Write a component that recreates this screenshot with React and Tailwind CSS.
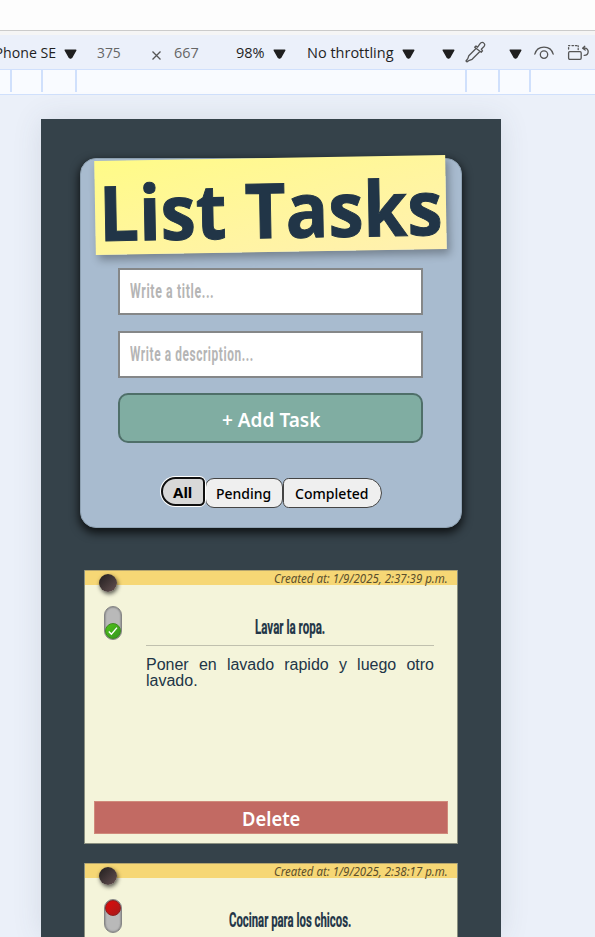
import { useLayoutEffect, useRef } from "react";

// Sets a line of text to an exact width by condensing it horizontally.
function Fit({ width, className = "", children }) {
  const ref = useRef(null);
  useLayoutEffect(() => {
    const el = ref.current;
    const apply = () => {
      el.style.transform = `scaleX(${width / el.offsetWidth})`;
    };
    apply();
    document.fonts?.ready.then(apply);
  }, [width]);
  return (
    <span className="block shrink-0 whitespace-nowrap" style={{ width }}>
      <span ref={ref} className={`inline-block origin-left align-top ${className}`}>
        {children}
      </span>
    </span>
  );
}

function Caret({ className = "" }) {
  return (
    <svg className={`shrink-0 ${className}`} width="13" height="11" viewBox="0 0 13 11">
      <path d="M1.2 1.2h10.6L7.6 8.6q-1.1 1.1-2.2 0Z" fill="#1f1f1f" stroke="#1f1f1f" strokeWidth="1.4" strokeLinejoin="round" />
    </svg>
  );
}

function Toolbar() {
  return (
    <div className="flex h-[34px] w-[595px] items-start overflow-hidden bg-[#ebf0fa] font-['Open_Sans','Noto_Sans',sans-serif] text-[15px] leading-[20px] text-[#1f1f1f]">
      <div className="-ml-[9px] flex pt-[7px]">
        <Fit width={65}>iPhone SE</Fit>
      </div>
      <Caret className="ml-[8px] mt-[14px]" />
      <div className="ml-[20px] pt-[7px] text-[#666]">
        <Fit width={24}>375</Fit>
      </div>
      <svg className="ml-[30px] mt-[15px] shrink-0" width="11" height="11" viewBox="0 0 11 11" stroke="#555" strokeWidth="1.3">
        <path d="m1.5 1.5 8 8m0-8-8 8" />
      </svg>
      <div className="ml-[12px] pt-[7px] text-[#666]">
        <Fit width={25}>667</Fit>
      </div>
      <div className="ml-[37px] pt-[7px]">
        <Fit width={29}>98%</Fit>
      </div>
      <Caret className="ml-[8px] mt-[14px]" />
      <div className="ml-[21px] pt-[7px]">
        <Fit width={87}>No throttling</Fit>
      </div>
      <Caret className="ml-[8px] mt-[14px]" />
      <Caret className="ml-[27px] mt-[14px]" />
      <svg className="ml-[10px] mt-[6px] shrink-0" width="22" height="22" viewBox="0 0 22 22" fill="none" stroke="#555" strokeWidth="1.3" strokeLinejoin="round" strokeLinecap="round">
        <path d="m11 7.5-7.2 7.3-1 2.8L1 20l.9.9 2.5-1.6 2.7-1 7.3-7.3" />
        <path d="m9.7 6.2 1.3-1.3 1.6 1.3 2.3-3.3c1-1.4 2.2-1.8 3.4-1.2 1.5.8 1.9 2.4.7 3.8l-2.7 2.7 1.2 1.7-1.3 1.3Z" />
      </svg>
      <Caret className="ml-[22px] mt-[14px]" />
      <svg className="ml-[12px] mt-[10px] shrink-0" width="20" height="16" viewBox="0 0 20 16" fill="none" stroke="#555" strokeWidth="1.3" strokeLinecap="round">
        <path d="M.8 9.2C2 4.8 5.5 2.2 10 2.2s8 2.6 9.2 7" />
        <circle cx="10" cy="9.6" r="3.7" />
      </svg>
      <svg className="ml-[13px] mt-[9px] shrink-0" width="22" height="17" viewBox="0 0 22 17" fill="none" stroke="#555" strokeWidth="1.3" strokeLinecap="round" strokeLinejoin="round">
        <rect x="1.6" y="7.7" width="12.6" height="7.6" rx="1.2" />
        <path d="M1.6 5V3.6M1.6 1.6h1.2M5 1.6h1.5M8.4 1.6h1.5M11.2 1.8v1M11.2 4.6v1" />
        <path d="M17.8 2.3 15.6 4.2l2.6 1.9M16 4.2h1.8c4.6 0 4.6 7.2-.6 7.2" />
      </svg>
    </div>
  );
}

function Ruler() {
  return (
    <div className="flex h-[26px] w-[595px] border-y border-[#d0e0fc] bg-[#f9fbff]">
      <div className="ml-[10px] h-[22px] w-[2px] bg-[#d0e0fc]" />
      <div className="ml-[29px] h-[22px] w-[2px] bg-[#d0e0fc]" />
      <div className="ml-[32px] h-[22px] w-[2px] bg-[#d0e0fc]" />
      <div className="ml-[388px] h-[22px] w-[2px] bg-[#d0e0fc]" />
      <div className="ml-[31px] h-[22px] w-[2px] bg-[#d0e0fc]" />
      <div className="ml-[29px] h-[22px] w-[2px] bg-[#d0e0fc]" />
    </div>
  );
}

function Field({ text, width, className }) {
  return (
    <div className={`w-[305px] shrink-0 border-2 border-[#858788] bg-white pl-[10px] font-[Roboto,sans-serif] text-[20px] font-bold leading-[43px] text-[#b5b5b5] ${className}`}>
      <Fit width={width} className="tracking-[1px]">{text}</Fit>
    </div>
  );
}

function TaskForm() {
  return (
    <div className="ml-[39px] mt-[39px] flex h-[370px] w-[382px] shrink-0 flex-col items-center rounded-[16px] border border-[#8fa2b3] bg-[#a8bbcf] pr-px shadow-[0_4px_10px_1px_rgba(0,0,0,0.75)]">
      <div className="-mt-px flex h-[94px] w-[351px] shrink-0 -rotate-1 bg-linear-to-br from-[#fffb87] to-[#fff0b0] pl-[4px] shadow-[3px_5px_9px_rgba(0,0,0,0.3)]">
        <h1 className="font-['Open_Sans','Noto_Sans',sans-serif] text-[76px] font-bold leading-[102px] text-[#213547]">
          <Fit width={343} className="[-webkit-text-stroke:1px_#213547]">List Tasks</Fit>
        </h1>
      </div>
      <Field text="Write a title..." width={84} className="mt-[16px] h-[47px]" />
      <Field text="Write a description..." width={124} className="mt-[16px] h-[47px]" />
      <div className="mt-[15px] flex h-[50px] w-[305px] shrink-0 justify-center rounded-[10px] border-2 border-[#4f6f69] bg-[#80ada2] pl-px text-[20px] font-semibold leading-[50px] text-white">
        <Fit width={98}>+ Add Task</Fit>
      </div>
      <div className="mt-[34px] flex pl-px text-[15px] font-medium leading-[27px] text-black">
        <div className="z-10 flex h-[29px] w-[44px] justify-center rounded-l-[16px] rounded-r-[6px] border-2 border-[#101010] bg-[#d8d8d8] font-bold shadow-[0_0_0_1px_#fff]">
          <Fit width={19}>All</Fit>
        </div>
        <div className="mt-px flex h-[30px] w-[78px] justify-center rounded-[9px] border border-[#444] bg-[#efefef] pt-px">
          <Fit width={55}>Pending</Fit>
        </div>
        <div className="mt-px flex h-[30px] w-[99px] justify-center rounded-l-[6px] rounded-r-[16px] border border-[#444] bg-[#efefef] pt-px">
          <Fit width={74}>Completed</Fit>
        </div>
      </div>
    </div>
  );
}

function Toggle({ done }) {
  return (
    <div className={`ml-[19px] mt-[21px] flex h-[34px] w-[18px] flex-col rounded-full border border-[#858585] bg-[#b9b9b9] shadow-[inset_0_0_2px_#555] ${done ? "justify-end" : "justify-start"}`}>
      {done ? (
        <div className="flex size-4 items-center justify-center rounded-full border border-[#3d8a1d] bg-linear-to-br from-[#4fc315] to-[#359520]">
          <svg width="12" height="12" viewBox="0 0 12 12" fill="none" stroke="white" strokeWidth="1.4">
            <path d="m1.8 6.5 2.6 2.8L10 2.6" />
          </svg>
        </div>
      ) : (
        <div className="size-4 rounded-full border border-[#8c2020] bg-linear-to-br from-[#df0606] to-[#a51818]" />
      )}
    </div>
  );
}

function Note({ date, title, titleWidth, text, done, className }) {
  return (
    <article className={`ml-[43px] flex h-[274px] w-[374px] shrink-0 flex-col border border-t-0 border-[#8b9080] bg-[#f4f4da] ${className}`}>
      <header className="flex h-[15px] shrink-0 justify-between border-t border-[#b5a56e] bg-[#f6d775]">
        <div className="ml-[14px] mt-[3px] size-[18px] rounded-full bg-linear-to-br from-[#211e1e] to-[#675253] shadow-[1px_2px_4px_rgba(0,0,0,0.65)]" />
        <div className="mr-[9px] text-[12px] italic leading-[15px] text-[#5b4f2c]">
          <Fit width={174}>{date}</Fit>
        </div>
      </header>
      <div className="flex h-[216px] shrink-0">
        <Toggle done={done} />
        <div className="ml-[24px] w-[288px]">
          <h2 className="flex h-[61px] justify-center border-b border-[#c0c0ae] pt-[32px] font-[Roboto,sans-serif] text-[20px] font-bold leading-[21px] text-[#213547]">
            <Fit width={titleWidth} className="[-webkit-text-stroke:0.2px_#213547]">{title}</Fit>
          </h2>
          <p className="pt-[11px] text-justify font-['Liberation_Sans',Arial,sans-serif] text-[16px] leading-[16px] text-[#213547]">
            {text}
          </p>
        </div>
      </div>
      <div className="ml-[9px] flex h-[33px] w-[354px] shrink-0 justify-center border border-[#d08a7b] bg-[#c26a63] text-[19px] font-semibold leading-[34px] text-white">
        <Fit width={58}>Delete</Fit>
      </div>
    </article>
  );
}

export default function App() {
  return (
    <div className="flex h-[937px] w-[595px] flex-col overflow-hidden bg-[#ebf0f9] font-['Noto_Sans','Open_Sans',sans-serif]">
      <div className="h-[31px] shrink-0 border-b border-[#cbcbcb] bg-[#fdfdfd]" />
      <div className="h-[4px] shrink-0 bg-[#f5f5f5]" />
      <Toolbar />
      <Ruler />
      <main className="ml-[41px] mt-[24px] flex h-[818px] w-[460px] shrink-0 flex-col overflow-hidden bg-[#35424a] shadow-[0_0_28px_rgba(60,70,90,0.12)]">
        <TaskForm />
        <Note className="mt-[42px]" done date="Created at: 1/9/2025, 2:37:39 p.m." title="Lavar la ropa." titleWidth={70} text="Poner en lavado rapido y luego otro lavado." />
        <Note className="mt-[19px]" date="Created at: 1/9/2025, 2:38:17 p.m." title="Cocinar para los chicos." titleWidth={122} text="" />
      </main>
    </div>
  );
}
